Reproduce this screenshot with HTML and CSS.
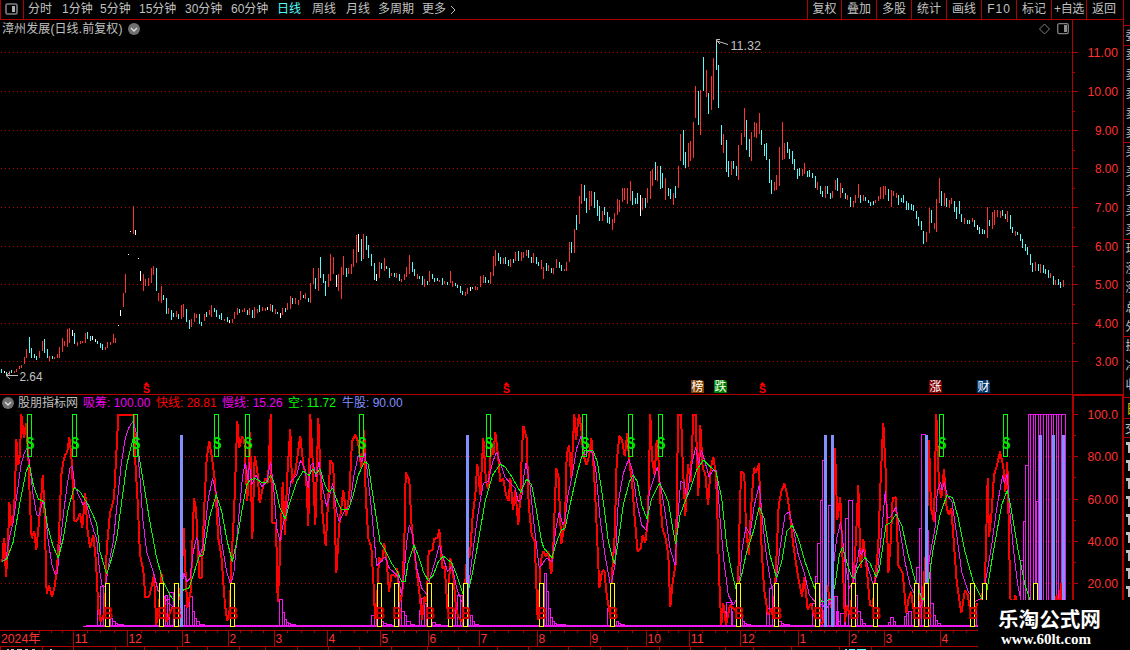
FILE: index.html
```html
<!DOCTYPE html>
<html lang="zh-CN">
<head>
<meta charset="utf-8">
<title>漳州发展</title>
<link rel="stylesheet" href="styles.css">
</head>
<body>
<div class="app">
  <div class="main">
    <header class="toolbar">
      <div class="layout-btn"><svg width="13" height="12" viewBox="0 0 13 12"><rect x="1" y="1" width="11" height="10" rx="1.5" fill="none" stroke="#808080" stroke-width="1.6"/><rect x="7" y="3" width="3" height="6" fill="#b0b0b0"/></svg></div>
      <nav class="periods">
        <span>分时</span><span>1分钟</span><span>5分钟</span><span>15分钟</span><span>30分钟</span><span>60分钟</span><span class="active">日线</span><span>周线</span><span>月线</span><span>多周期</span><span>更多</span>
        <svg width="6" height="10" viewBox="0 0 6 10"><path d="M1 1L5 5L1 9" fill="none" stroke="#c0c0c0"/></svg>
      </nav>
      <nav class="tools">
        <span>复权</span><span>叠加</span><span>多股</span><span>统计</span><span>画线</span><span>F10</span><span>标记</span><span>+自选</span><span>返回</span>
      </nav>
    </header>
    <section class="price">
      <div class="title-row">
        <span class="stock">漳州发展(日线.前复权)</span>
        <svg class="chev" width="12" height="12" viewBox="0 0 12 12"><circle cx="6" cy="6" r="6" fill="#707070"/><path d="M3 5L6 8L9 5" fill="none" stroke="#e0e0e0" stroke-width="1.3"/></svg>
        <svg class="marks" width="30" height="12" viewBox="0 0 30 12"><path d="M0.5 6L5.5 1L10.5 6L5.5 11Z" fill="none" stroke="#808080"/><rect x="18.7" y="0.7" width="10.6" height="10" rx="1.5" fill="none" stroke="#808080" stroke-width="1.3"/><rect x="25" y="2" width="3" height="7" fill="#909090"/></svg>
      </div>
      <svg class="plot" id="price" width="1123" height="374" viewBox="0 20 1123 374"></svg>
    </section>
    <section class="indicator">
      <div class="legend">
        <svg width="12" height="12" viewBox="0 0 12 12"><circle cx="6" cy="6" r="6" fill="#707070"/><path d="M3 5L6 8L9 5" fill="none" stroke="#e0e0e0" stroke-width="1.3"/></svg>
        <span>股朋指标网</span><span class="magenta">吸筹: 100.00</span><span class="red">快线: 28.81</span><span class="magenta">慢线: 15.26</span><span class="green">空: 11.72</span><span class="blue">牛股: 90.00</span>
      </div>
      <svg class="plot" id="indicator" width="1123" height="256" viewBox="0 394 1123 256"></svg>
    </section>
  </div>
  <aside class="side"><svg id="side" width="7" height="650" viewBox="1123 0 7 650"></svg></aside>
  <div class="brand"><div class="brand-name">乐淘公式网</div><div class="brand-url">www.60lt.com</div></div>
</div>
<script src="chart.js"></script>
</body>
</html>
```
FILE: styles.css
```css
* { box-sizing: border-box; }
body { margin: 0; background: #000; color: #c0c0c0; font: 12px "Liberation Sans", "Noto Sans CJK SC", sans-serif; overflow: hidden; }
.app { position: relative; display: flex; width: 1130px; height: 650px; overflow: hidden; }
.main { width: 1123px; display: flex; flex-direction: column; }
.toolbar { display: flex; height: 20px; border-bottom: 1px solid #b00000; line-height: 19px; white-space: nowrap; }
.layout-btn { width: 24px; border: solid #b00000; border-width: 0 1px; display: flex; align-items: center; justify-content: center; padding: 0 2px 1px 0; }
.periods { display: grid; grid-template-columns: 34px 38px 39px 46px 46px 46px 35px 34px 32px 44px 28px 8px; margin-left: 4px; align-items: center; }
.active { color: #54fcfc; }
.tools { display: grid; grid-template-columns: 34px repeat(8, 35px); margin-left: auto; width: 316px; }
.tools span { border-left: 1px solid #b00000; text-align: center; }
.tools span:nth-child(6) { letter-spacing: 1px; }
.tools span:nth-child(8) { letter-spacing: -0.3px; }
.price { display: grid; height: 374px; }
.indicator { display: grid; height: 256px; }
.plot, .title-row, .legend { grid-area: 1 / 1; display: block; }
.title-row { display: flex; height: 18px; align-items: center; padding: 0 54px 0 2px; }
.stock { width: 126px; letter-spacing: 0.1px; line-height: 16px; white-space: nowrap; }
.marks { margin-left: auto; }
.legend { display: grid; grid-template-columns: 16px 65px 73px 66px 66px 54px 70px; height: 18px; align-items: center; padding-left: 2px; white-space: nowrap; }
.legend span { line-height: 16px; }
.magenta { color: #f000f0; }
.red { color: #f00; }
.green { color: #0f0; }
.blue { color: #8090ff; }
.side { width: 7px; overflow: hidden; }
.side svg { display: block; }
.brand { position: absolute; left: 978px; top: 600px; width: 152px; height: 50px; background: #000; color: #fff; padding: 3px 0 0 20px; }
.brand-name { font: 700 20.6px/30px "Noto Sans CJK SC", sans-serif; white-space: nowrap; height: 30px; }
.brand-url { font: 700 15px/16px "Liberation Serif", serif; padding-left: 3px; margin-top: -2px; }
text { font-family: "Liberation Sans", "Noto Sans CJK SC", sans-serif; }
```
FILE: chart.js
```js
const NS = 'http://www.w3.org/2000/svg';
const price = document.getElementById('price');
const ind = document.getElementById('indicator');
const side = document.getElementById('side');

function el(parent, tag, attrs, text) {
  const e = document.createElementNS(NS, tag);
  for (const k in attrs) e.setAttribute(k, attrs[k]);
  if (text) e.textContent = text;
  parent.appendChild(e);
  return e;
}
const rect = (p, x, y, w, h, fill) => el(p, 'rect', { x, y, width: w, height: h, fill, 'shape-rendering': 'crispEdges' });
const box = (p, x, y, w, h, stroke) => el(p, 'rect', { x: x + .5, y: y + .5, width: w - 1, height: h - 1, fill: 'none', stroke, 'shape-rendering': 'crispEdges' });
const label = (p, x, y, s, fill, size, len, extra) => el(p, 'text', Object.assign({ x, y, fill, 'font-size': size }, len ? { textLength: len, lengthAdjust: 'spacingAndGlyphs' } : {}, extra), s);
const RED = '#b00000', TEXT = '#ff3232';
const grid = (p, y) => el(p, 'path', { d: `M1 ${y + .5}H1072`, stroke: '#b00000', 'stroke-dasharray': '1 3', 'shape-rendering': 'crispEdges' });

/* price scale */
[52, 91, 130, 168, 207, 246, 284, 323, 361].forEach((y, i) => {
  grid(price, y);
  rect(price, 1073, y, 5, 1, RED);
  if (i < 8) rect(price, 1073, y + 20, 2, 1, RED);
  const s = (11 - i).toFixed(2), w = s.length * 7.6 - 7.4;
  label(price, 1118 - w, y + 5, s, TEXT, 13, w);
});
rect(price, 1072, 20, 1, 374, RED);

/* candles: x low high in thirds of a pixel, with colour letter */
const candles = [
  [0, 200, `5 508 518c,14 513 519w,20 515 527c,27 514 524r,35 510 520c,43 513 518r,50 507 515r,58 498 506r,65 495 504r,73 471 492r,79 447 473r,88 411 459c,95 445 474c,103 462 474c,109 468 480c,118 453 473r,127 423 453r,134 417 459c,142 447 474c,149 468 483r,157 468 476c,163 470 476r,172 462 474r,178 441 473r,187 414 456r,193 423 438r,202 387 441r,208 384 429r,217 390 408w,223 399 432c,232 426 438r,241 423 432r,247 423 430r,256 399 429r,262 396 417c,271 408 423c,277 408 420w,286 417 426w,292 423 433c,301 429 444c,307 432 450c,316 441 450r,322 426 444r,331 426 435r,340 402 429r,346 414 429r,355 375 378w,361 330 348w,370 279 321r,376 222 279r,385 162 165w,391 93 96w,400 18 102r,406 90 105w,415 174 177w,421 213 243w,430 222 273r,436 237 258r,445 234 258r,454 204 249r,460 198 225r,469 204 273c,475 279 303r,484 258 309r,490 285 300c,499 294 342c,505 324 342r,514 330 360c,520 339 351c,529 333 351r,535 342 357c,544 315 357r,550 312 351r,559 327 366c,568 360 387c,574 357 381r,583 339 366r,589 342 354r,598 342 372c,604 366 378c,613 342 363r,619 336 351c,628 330 345r,634 315 351r,643 324 336c,649 330 351c,658 345 357c,664 339 360c,673 357 363r,682 351 366c,688 360 369w,697 357 368r,703 336 357r,712 324 345r,718 327 339c,727 330 336r,733 324 336r,742 330 345c,748 324 345r,757 330 354c,763 321 354r,772 327 339r,778 315 336c,787 321 333r,796 324 333r,802 321 330w,811 312 333r,817 315 336c,826 327 342r,832 336 342c`],
  [280, 200, `1 339 354w,7 324 345r,16 324 336c,22 309 330r,31 288 327r,37 294 312c,46 294 312r,55 300 315r,61 273 300r,70 285 294c,76 279 297r,85 294 306c,91 249 309r,100 204 252r,106 234 267c,115 204 273r,121 171 234c,130 222 249c,136 243 288c,145 222 261r,151 162 243r,160 171 222r,169 225 261w,175 222 273r,184 201 297r,190 168 225r,199 204 231c,205 204 222r,214 192 222r,220 147 201r,229 105 189r,235 102 156w,244 117 183c,250 102 177r,259 108 150c,265 135 174c,274 162 198c,283 189 240c,289 222 243w,298 186 234r,304 189 207c,313 174 213r,319 198 207c,328 204 234c,334 219 228r,343 219 231c,349 219 234r,358 222 243c,364 237 246r,373 222 240r,379 201 231r,388 165 222r,397 186 216c,403 207 228c,412 222 237r,418 228 237c,427 228 255c,433 237 261r,442 243 255c,448 213 246r,457 222 237c,463 234 246c,472 234 243c,478 240 246r,487 234 255c,493 243 252r,502 246 255c,511 213 249r,517 243 261r,526 249 258c,532 255 264c,541 258 279c,547 273 285c,556 276 288r,562 264 282r,571 261 273w,577 261 267c,586 258 270r,592 261 270r,601 228 261r,610 225 249r,616 231 249c,625 240 249c,631 216 252r,640 168 228r,646 150 198r,655 159 183c,661 171 192c,670 174 192r,676 171 192c,685 180 198c,691 177 201r,700 177 189c,706 156 183r,715 153 183c,724 156 183r,730 156 174r,739 150 168r,745 150 174c,754 171 189c,760 159 189r,769 171 192c,775 186 198c,784 180 207r,790 201 237r,799 189 213c,805 195 213r,814 204 219c,820 204 222r,829 177 204r,838 186 204c`],
  [540, 20, `65 735 753c,73 747 753r,79 726 753r,88 666 726r,94 666 699c,103 627 699r,109 585 630c,118 528 612r,124 492 552r,133 495 543c,139 534 579c,148 513 570r,154 513 558r,163 516 564c,172 540 588c,178 558 603c,187 573 603r,193 561 585c,202 576 609c,208 591 612c,217 597 630r,223 579 609r,232 537 585r,238 540 576r,247 504 546r,253 504 540r,262 504 552r,271 483 543r,277 513 555c,286 534 552c,292 519 552c,301 525 588w,307 534 570r,316 534 564c,322 504 549r,331 453 537r,337 447 498r,346 426 480c,352 438 483r,361 438 507c,367 459 504c,376 474 540r,385 504 528c,391 507 537c,400 519 555r,406 498 534c,415 438 504r,421 342 423r,430 330 435c,436 396 444c,445 369 441r,451 363 423r,460 306 414r,466 198 294r,475 213 315c,481 210 345r,490 111 213c,499 150 231r,505 219 282c,514 168 270r,520 114 240r,529 63 150c,535 135 264c,544 315 375c,550 342 399r,559 360 456c,565 423 471c,574 423 465r,580 423 447c,589 438 468c,595 375 480r,604 339 375r,613 264 351r,619 300 390c,628 357 411c,634 336 423r,643 306 351r,649 309 354r,658 279 342r,664 330 375c,673 372 408c,679 369 420c,688 417 489c,694 480 522c,703 486 513r,709 465 510r,718 381 498r,727 306 420r,733 369 417r,742 366 399c,748 387 417c,757 393 432c,763 417 450c,772 447 477c,778 444 468c,787 447 468r,793 429 462r,802 453 471c,808 450 471c,817 459 474c,826 468 504c,832 486 510r`],
  [800, 160, `61 78 102c,67 93 111c,76 78 114r,82 78 102c,91 99 117c,97 93 114r,106 60 90r,112 54 93c,121 69 114r,127 84 99c,136 99 117c,142 105 120r,151 111 141c,160 123 141r,166 105 129r,175 72 114r,181 105 129c,190 105 123r,196 111 123c,205 120 129c,211 126 138c,220 123 135c,226 120 129r,235 108 123r,241 81 117r,250 78 117r,256 78 105r,265 87 123c,274 90 141r,280 93 108r,289 99 114r,295 105 135c,304 114 126c,310 105 129c,319 123 150c,325 129 150c,334 132 150c,340 135 153c,349 153 177c,355 171 198c,364 183 210c,370 213 252c,379 216 246r,388 144 219r,394 150 189c,403 189 207r,409 117 216r,418 54 129r,424 93 138c,433 99 138r,439 114 141c,448 120 144r,454 114 132r,463 123 156c,469 141 177c,478 123 162c,484 162 186c,493 174 192r,502 180 192c,508 180 192c,517 174 186r,523 180 201c,532 195 210w,538 201 222c,547 207 222c,553 210 222c,562 141 234r,568 180 198c,577 156 207r,583 150 195r,592 150 171r,601 153 174r,607 150 168c,616 162 177c,622 153 186r,631 165 207c,637 201 219c,646 213 228r,652 216 225c,661 222 243c,667 237 264c,676 252 273c,682 261 285c,691 282 315c,697 309 336c,706 306 333r,715 312 333c,721 312 339r,730 315 339c,736 327 342c,745 330 354c,751 339 354r,760 348 375c,766 360 375r,775 357 375c,781 366 384c,790 360 381r`]
];
const candleColor = { r: '#ff3232', c: '#54fcfc', w: '#ffffff' };
candles.forEach(([ox, oy, data]) => data.split(',').forEach(d => {
  const [x, a, b] = d.slice(0, -1).split(' ').map(Number);
  const top = Math.round(a / 3);
  rect(price, ox + Math.floor(x / 3), oy + top, 1, Math.round(b / 3) - top, candleColor[d.slice(-1)]);
}));

/* annotations */
el(price, 'path', { d: 'M18 375.5H6M10 372.5L6 375.5L10 379', fill: 'none', stroke: '#c0c0c0' });
label(price, 19.5, 381, '2.64', '#c0c0c0', 13, 23);
el(price, 'path', { d: 'M728 44.5L717 41M720 39.5H716.5V44M717 41L720 44', fill: 'none', stroke: '#c0c0c0' });
label(price, 730.5, 50, '11.32', '#c0c0c0', 13, 30.5);
[143, 503, 759].forEach(x => {
  el(price, 'path', { d: `M${x + .5} 385L${x + 3.5} 382L${x + 6.5} 385Z`, fill: '#f00' });
  label(price, x, 393, 'S', '#f00', 11, 7, { 'font-weight': 700 });
});
[[691, '榜', '#804000'], [714, '跌', '#008000'], [929, '涨', '#800000'], [977, '财', '#003870']].forEach(([x, s, c]) => {
  el(price, 'path', { d: `M${x} 380H${x + 11}L${x + 13} 382V393H${x}Z`, fill: c });
  label(price, x + .5, 391, s, '#fff', 12, 12, { 'font-weight': 400 });
});

/* indicator scale */
rect(ind, 0, 394, 1123, 1, RED);
rect(ind, 1072, 395, 2, 205, RED);
rect(ind, 1072, 394, 51, 2, RED);
rect(ind, 1122, 395, 2, 205, RED);
[414, 456, 499, 541, 583].forEach((y, i) => {
  if (i) grid(ind, y);
  rect(ind, 1074, y, 4, 1, RED);
  if (i < 4) rect(ind, 1074, y + 21, 2, 1, RED);
  label(ind, 1087.5, y + 5, ['100.0', '80.00', '60.00', '40.00', '20.00'][i], TEXT, 13, 30.5);
});

/* accumulation bars: left right top */
const MAG = '#f018f0';
const bars = [
  [0, '292 302 605,302 311 575,330 338 670,338 345 680,345 352 684,352 370 688,495 502 600,502 509 612,509 520 592,520 535 640,552 560 630,560 568 620,568 576 603,576 582 650,582 590 670,590 598 680,598 612 688'],
  [270, '27 38 613,38 44 652,44 50 672,50 56 682,56 62 686,62 75 688,305 312 660,312 318 640,335 341 680,341 350 684,350 365 688,388 395 600,395 402 650,402 408 660,408 420 680,420 432 688,448 455 645,455 462 610,462 468 625,487 495 682,495 510 688,548 555 645,555 562 630,562 570 600,570 577 600,600 606 660,606 614 680,614 625 687'],
  [540, '12 18 535,18 26 590,26 32 640,32 38 668,38 44 680,44 50 685,50 75 688,202 210 640,228 234 680,234 240 684,240 252 688,555 560 650,560 573 622,573 578 650,602 608 660,608 612 680,612 620 684,620 632 688,680 688 640,688 698 580,716 724 680,724 730 685,730 748 688,818 826 625,826 832 545,832 840 445,840 846 315,846 860 195,865 873 330,883 892 605'],
  [830, '20 26 650,26 32 680,32 42 655,47 55 370,55 68 317,68 75 510,75 82 600,82 90 650,90 98 672,98 105 685,175 180 682,180 190 667,190 197 680,222 228 665,228 235 655,235 243 648,258 268 518,268 275 400,275 286 118,286 295 405,295 302 505,302 310 624,310 317 660,317 323 675,323 332 685,440 446 625,570 580 495,580 586 380,586 594 212,595 601 58,601 610 58,610 617 58,617 624 58,619 625 320,624 632 58,632 640 58,640 648 58,648 655 58,655 663 58,663 670 58,670 678 58,678 685 58,685 693 58,693 706 58']
];
bars.forEach(([ox, data]) => data.split(',').forEach(d => {
  const [l, r, t] = d.split(' ').map(v => Math.floor(v / 3));
  box(ind, ox + l, 395 + t, r - l + 1, 232 - t, MAG);
}));
rect(ind, 86, 625, 892, 2, MAG);
rect(ind, 83, 626, 3, 1, MAG);

/* line series, one chunk per horizontal section */
const line = (chunks, color, width) => {
  const pts = chunks.flatMap(([ox, s]) => s.trim().split(' ').map(p => {
    const [x, y] = p.split(',').map(Number);
    return (ox + x / 3).toFixed(1) + ',' + (395 + y / 3).toFixed(1);
  }));
  el(ind, 'polyline', { points: pts.join(' '), fill: 'none', stroke: color, 'stroke-width': width, 'stroke-linejoin': 'bevel', 'shape-rendering': 'crispEdges' });
};
line([
  [0, '5,500 8,490 8,460 13,430 18,545 24,450 28,320 34,392 40,370 45,290 49,133 55,210 60,180 64,58 72,130 78,85 85,180 90,330 95,430 103,408 109,465 118,370 122,330 128,240 133,330 140,597 147,570 156,606 165,570 173,490 177,420 184,240 190,200 196,180 202,170 208,125 214,180 220,300 223,378 232,376 240,355 247,398 256,295 262,400 270,458 280,420 288,500 295,640 302,680 315,650 320,460 330,355 342,310 352,120 355,59 402,59 406,200 413,320 420,480 430,525 436,607 447,605 456,570 462,540 469,690 478,620 484,530 492,620 500,680 515,640 530,630 540,600 546,520 551,400 555,500 562,640 572,590 582,310 588,340 598,548 605,548 612,350 620,190 628,138 636,190 645,260 655,430 664,480 675,630 682,678 690,640 694,500 702,360 712,78 718,158 726,125 733,135 742,318 750,110 757,432 764,182 772,225 779,325 788,280 796,250 804,265'],
  [270, '2,58 6,383 18,384 23,620 28,530 38,262 45,420 52,240 61,103 66,265 76,230 91,122 100,210 108,240 115,392 121,58 128,200 136,390 145,70 155,330 160,380 167,452 181,195 190,210 199,535 208,390 220,285 229,362 238,300 246,140 256,118 264,140 274,220 283,105 287,300 295,430 304,455 312,590 315,672 322,600 327,488 336,500 343,445 350,500 357,590 365,538 378,545 382,520 390,620 397,600 404,400 407,233 418,255 424,380 432,460 440,530 448,590 456,675 463,605 470,620 476,468 488,465 492,432 503,428 508,402 517,520 524,515 533,650 541,490 550,540 558,640 565,665 578,680 590,500 600,480 608,360 616,300 622,206 631,300 640,128 648,260 655,282 664,150 670,180 676,110 684,180 691,260 700,250 708,300 716,318 721,248 729,345 736,285 745,390 752,290 755,180 760,92 770,130 776,330 785,420 794,440 803,675 808,600 812,500 820,468 828,485'],
  [540, '25,470 34,538 40,460 44,340 49,218 56,250 60,360 64,446 75,380 80,180 87,150 94,248 103,58 108,135 117,58 124,100 130,180 140,210 148,180 154,128 162,230 168,350 178,578 186,530 193,525 200,600 210,660 216,540 224,420 230,200 238,122 246,135 254,182 262,115 268,200 276,260 284,370 293,470 302,460 308,420 316,444 324,370 331,58 336,190 344,240 350,135 356,200 361,320 368,405 376,425 385,480 391,637 398,560 408,500 411,250 415,59 423,59 428,200 436,362 444,208 452,262 456,160 460,59 467,59 470,160 475,302 481,90 488,220 496,235 504,330 512,220 520,186 528,240 532,350 538,560 544,690 550,625 558,690 570,630 580,640 590,650 596,500 600,320 604,228 613,238 618,400 626,480 634,330 642,218 648,232 657,205 664,440 672,580 684,660 694,640 700,672 708,520 716,330 724,290 733,266 742,300 750,360 760,450 775,550 786,605 793,545 803,645 812,625 822,660 838,690 850,680 862,570 874,640'],
  [830, '8,560 15,158 22,375 31,305 38,500 45,680 50,630 60,660 70,560 78,430 85,270 92,520 100,432 110,520 120,630 128,635 135,560 145,450 152,250 160,83 167,230 175,535 182,440 188,310 198,306 205,510 218,535 229,655 236,610 243,590 250,640 258,670 268,600 276,640 284,520 290,440 297,135 303,340 312,380 319,58 327,270 334,310 342,222 350,340 357,360 364,340 370,420 380,560 394,655 405,585 413,600 420,640 430,670 440,630 452,620 465,560 473,248 477,425 484,365 492,240 500,215 510,170 520,215 526,290 532,200 537,420 541,610 548,640 556,600 562,640 670,640 680,600 688,640 693,565 698,640']
], '#f00', 2);
line([
  [0, '5,500 18,490 28,430 40,380 52,290 64,205 73,175 80,160 88,195 98,290 110,360 118,360 128,318 135,340 145,440 156,510 165,538 172,535 180,450 190,360 200,280 210,220 217,212 225,275 240,310 250,330 258,320 270,370 282,410 290,430 298,520 306,570 316,575 328,500 340,440 352,320 364,205 376,130 388,95 400,78 408,110 420,250 428,370 440,470 460,530 475,590 490,600 505,625 520,635 540,600 552,535 560,560 570,550 580,470 590,425 600,485 610,450 625,310 638,250 650,300 665,440 680,530 692,570 702,530 715,380 728,240 736,205 745,260 748,200 755,270 768,240 785,275 800,260'],
  [270, '2,200 12,290 20,400 30,437 40,385 48,360 62,260 80,240 92,195 105,225 115,280 122,210 130,205 138,245 147,200 158,280 170,335 188,265 200,350 208,380 225,345 240,330 252,240 265,180 275,200 285,175 292,230 305,350 320,512 333,500 345,485 358,520 375,535 385,545 394,600 402,540 410,440 418,390 428,420 440,520 455,580 470,598 480,550 495,500 508,450 520,490 533,530 546,512 560,580 575,620 590,640 600,540 610,460 625,350 640,265 655,260 668,200 680,170 690,200 705,245 720,265 735,280 745,320 755,310 762,240 768,205 780,270 790,370 808,520 825,495'],
  [540, '22,490 36,500 48,400 58,350 68,390 76,370 84,300 95,250 110,160 124,122 135,180 148,165 158,175 168,230 180,370 195,480 212,575 225,510 235,320 250,235 266,192 278,230 290,320 305,390 320,407 328,290 340,255 352,215 365,290 375,350 390,460 405,510 415,350 422,260 432,262 440,310 455,210 467,155 476,210 484,165 495,200 507,245 520,225 530,228 540,370 552,500 565,600 580,630 596,600 605,470 618,395 630,420 642,335 658,270 668,380 680,490 695,580 708,560 720,460 735,360 748,350 762,410 775,480 792,530 808,600 825,620 840,625 860,640 874,620'],
  [830, '8,530 20,430 32,380 45,500 58,580 70,560 80,510 88,460 94,480 100,462 115,520 130,570 142,540 155,410 166,287 172,370 182,365 198,335 212,420 225,500 240,570 255,600 270,640 284,600 300,480 315,400 322,290 332,260 336,285 343,262 352,300 366,320 380,420 395,530 415,590 435,620 455,610 470,540 485,450 500,340 518,240 523,265 532,238 538,330 550,460 562,560 572,615']
], '#f018f0', 1);
line([
  [0, '5,500 20,493 40,440 60,320 78,230 88,208 100,270 115,312 132,320 142,390 158,450 175,490 190,430 205,340 222,278 240,290 265,330 290,385 300,470 320,538 335,490 350,430 365,320 380,210 400,128 412,150 428,250 448,370 470,490 490,560 510,600 525,620 550,585 568,578 580,540 598,483 610,480 628,370 649,298 665,350 682,440 697,500 710,440 725,350 740,270 750,255 765,250 785,262 800,263'],
  [270, '2,240 15,270 30,340 46,372 60,320 80,260 100,228 118,242 128,222 138,238 150,222 165,270 177,292 188,280 200,315 214,343 235,345 250,300 265,240 284,200 295,208 310,310 330,440 345,465 365,505 382,530 395,560 405,560 415,500 432,450 448,490 460,530 475,557 490,540 505,500 520,483 545,503 560,540 580,600 592,600 605,545 625,440 645,320 668,240 690,208 705,215 725,245 752,292 770,252 785,270 800,350 815,440'],
  [540, '12,460 36,488 50,440 64,405 75,400 90,330 110,240 125,185 135,165 158,165 172,200 190,320 205,440 223,508 235,440 250,330 268,260 280,240 292,260 305,330 321,372 335,310 358,265 372,290 385,320 398,400 407,448 420,360 435,320 452,280 470,225 490,195 505,210 528,230 545,310 560,450 575,530 590,590 605,540 620,470 640,410 658,335 672,370 690,480 710,550 725,500 740,410 757,390 775,430 795,500 820,570 845,620 875,612'],
  [830, '15,570 28,480 38,455 50,500 65,545 73,550 85,515 105,487 120,505 138,545 148,525 168,390 180,385 198,358 215,390 235,480 255,555 278,615 290,600 310,460 330,360 350,302 368,308 385,370 405,470 430,560 455,610 470,590 490,470 515,330 532,285 545,350 565,470 585,570 600,615']
], '#0f0', 1);

[180, 466, 824, 831, 925, 1039, 1052, 1062].forEach(x => rect(ind, x, 435, 3, 192, '#8090ff'));

/* buy and sell signals */
[105, 159, 174, 230, 377, 394, 427, 448, 463, 539, 610, 736, 774, 815, 851, 873, 914, 924, 970, 982, 1033].forEach(x => {
  rect(ind, x, 583, 5, 44, '#000');
  box(ind, x, 583, 5, 44, '#ffff00');
  if (x < 980) label(ind, x - 2, 619, 'B', '#d80000', 16, 10, { 'font-weight': 700 });
});
[27, 72, 133, 214, 245, 359, 486, 582, 628, 658, 939, 1003].forEach(x => {
  box(ind, x, 414, 5, 43, '#0f0');
  label(ind, x - 1, 449, 'S', '#00e800', 16, 8.5, { 'font-weight': 700 });
});

/* time axis */
rect(ind, 0, 630, 978, 1, RED);
rect(ind, 0, 646, 978, 1, RED);
label(ind, 1, 643, '2024年', TEXT, 12.5, 39.5);
const months = [[73, '11'], [127, '12'], [182, '1'], [228, '2'], [274, '3'], [327, '4'], [380, '5'], [428, '6'], [479, '7'], [537, '8'], [590, '9'], [646, '10'], [689, '11'], [740, '12'], [798, '1'], [849, '2'], [884, '3'], [940, '4'], [992, '']];
months.forEach(([x, s], i) => {
  rect(ind, x, 630, 1, 17, RED);
  label(ind, x + 1.5, 643, s, TEXT, 13, s.length * 6.7);
  if (i) for (let k = 1; k < 4; k++) rect(ind, Math.round(months[i - 1][0] + (x - months[i - 1][0]) * k / 4), 631, 1, 2, RED);
});
[39, 51, 62].forEach(x => rect(ind, x, 631, 1, 2, RED));
[0, 42, 73, 115, 144, 177, 207, 239, 265, 297, 328, 359, 391, 427, 458, 497, 528, 568, 600, 627, 659, 690, 725, 753, 791, 839, 871].forEach(x => rect(ind, x, 647, 1, 3, RED));
[[7, 2], [11, 3], [17, 5], [25, 3], [32, 3], [50, 2]].forEach(([x, w]) => rect(ind, x, 649, w, 1, '#c0c0c0'));
[[845, 2], [849, 6], [857, 9]].forEach(([x, w]) => rect(ind, x, 649, w, 1, '#54fcfc'));

/* quote strip cut off by the window edge */
rect(side, 1123, 0, 1, 600, RED);
[25, 45, 142, 239, 336, 397, 418, 437].forEach(y => rect(side, 1123, y, 7, 1, RED));
[...'委卖卖卖卖卖买买买买买现涨涨总外换净收'].forEach((c, i) => label(side, 1125.5, 40 + i * 19.4, c, '#c0c0c0', 12));
label(side, 1126, 413, '日', '#d0d000', 13);
label(side, 1125, 433, '交', '#c0c0c0', 12);
for (let y = 442; y < 600; y += 18) {
  rect(side, 1126, y, 4, 3, '#c0c0c0');
  rect(side, 1128, y + 3, 2, 8, '#c0c0c0');
}
```
